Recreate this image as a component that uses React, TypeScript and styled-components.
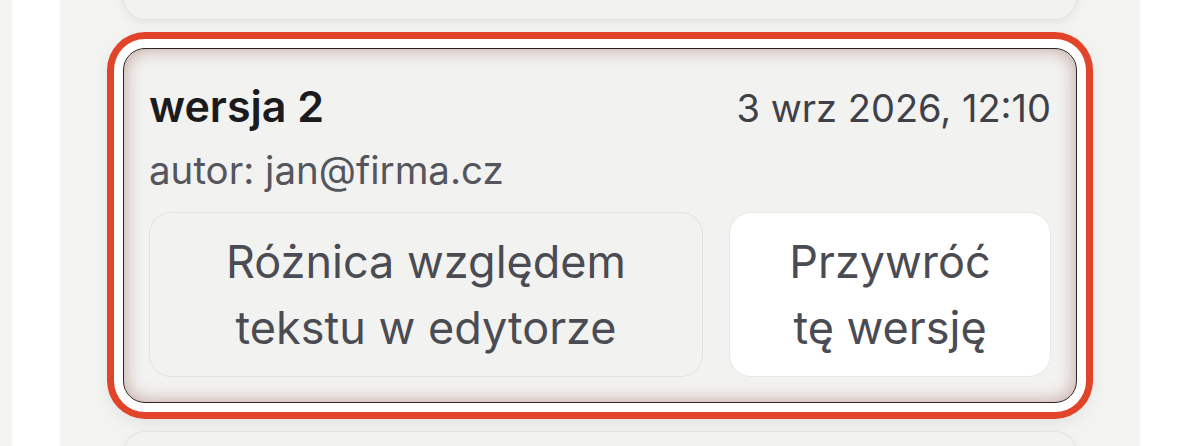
import React from 'react';
import styled, { createGlobalStyle } from 'styled-components';

const GlobalStyle = createGlobalStyle`
  html, body {
    margin: 0;
    padding: 0;
    background: #ffffff;
    font-family: Inter, "Noto Sans", "Liberation Sans", sans-serif;
  }
  * {
    box-sizing: border-box;
  }
`;

const Page = styled.div`
  display: flex;
  height: 446px;
  overflow: hidden;
  background: #ffffff;
`;

const Rail = styled.div`
  width: 12px;
  flex-shrink: 0;
  background: #f3f3f2;
`;

const Panel = styled.div`
  margin-left: 48px;
  width: 1080px;
  flex-shrink: 0;
  background: #f3f3f2;
  overflow: hidden;
`;

// list is scrolled so the selected version sits in view
const List = styled.div`
  display: flex;
  flex-direction: column;
  gap: 28px;
  padding: 0 63px;
  margin-top: -130px;
`;

const Card = styled.div<{ $selected?: boolean }>`
  display: flex;
  flex-direction: column;
  padding: 26px 25px 25px;
  border-radius: 22px;
  background: #f2f2f0;
  border: 1.5px solid ${(p) => (p.$selected ? '#2e2424' : '#e3e3e0')};
  box-shadow: ${(p) =>
    p.$selected
      ? 'inset 0 0 18px rgba(130, 60, 50, 0.45), 0 0 0 9px #ffffff, 0 0 0 16px #e2442a, 0 6px 18px 14px rgba(0, 0, 0, 0.07)'
      : '0 3px 8px rgba(0, 0, 0, 0.06)'};
`;

const PlaceholderCard = styled(Card)`
  height: 150px;
`;

const Header = styled.div`
  display: flex;
  justify-content: space-between;
  align-items: baseline;
  line-height: 62px;
`;

const Title = styled.span`
  font-size: 43px;
  font-weight: 600;
  color: #1b1b1d;
`;

const Date = styled.span`
  font-size: 38px;
  color: #404148;
`;

const Author = styled.div`
  margin-top: 8px;
  font-size: 38.5px;
  color: #55565d;
  line-height: 46px;
`;

const Actions = styled.div`
  display: flex;
  gap: 26px;
  margin-top: 19px;
`;

const ActionButton = styled.button<{ $primary?: boolean }>`
  flex: ${(p) => (p.$primary ? '0 0 322px' : '1 1 auto')};
  height: 165px;
  padding: 0 50px;
  border-radius: 22px;
  border: 1.5px solid ${(p) => (p.$primary ? '#e7e7e4' : '#e2e2df')};
  background: ${(p) => (p.$primary ? '#ffffff' : '#f2f2f0')};
  color: #4a4b53;
  font-family: inherit;
  font-size: 45px;
  line-height: 66px;
  text-align: center;
`;

export default function App() {
  return (
    <>
      <GlobalStyle />
      <Page>
        <Rail />
        <Panel>
          <List>
            <PlaceholderCard />
            <Card $selected>
              <Header>
                <Title>wersja 2</Title>
                <Date>3 wrz 2026, 12:10</Date>
              </Header>
              <Author>autor: jan@firma.cz</Author>
              <Actions>
                <ActionButton>Różnica względem tekstu w edytorze</ActionButton>
                <ActionButton $primary>Przywróć tę wersję</ActionButton>
              </Actions>
            </Card>
            <PlaceholderCard />
          </List>
        </Panel>
      </Page>
    </>
  );
}
